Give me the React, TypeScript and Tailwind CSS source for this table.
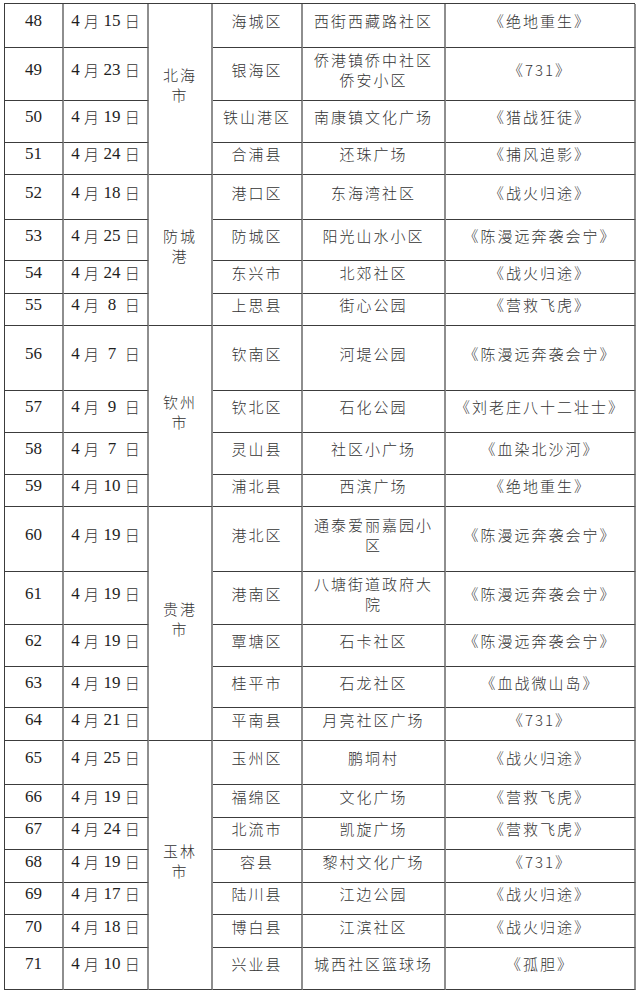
import React from 'react';

type Row = { no: number; date: string; district: string; place: string; film: string };
type Group = { city: string; rows: Row[] };

const groups: Group[] = [
  {
    city: '北海市',
    rows: [
      { no: 48, date: '4 月 15 日', district: '海城区', place: '西街西藏路社区', film: '《绝地重生》' },
      { no: 49, date: '4 月 23 日', district: '银海区', place: '侨港镇侨中社区侨安小区', film: '《731》' },
      { no: 50, date: '4 月 19 日', district: '铁山港区', place: '南康镇文化广场', film: '《猎战狂徒》' },
      { no: 51, date: '4 月 24 日', district: '合浦县', place: '还珠广场', film: '《捕风追影》' },
    ],
  },
  {
    city: '防城港',
    rows: [
      { no: 52, date: '4 月 18 日', district: '港口区', place: '东海湾社区', film: '《战火归途》' },
      { no: 53, date: '4 月 25 日', district: '防城区', place: '阳光山水小区', film: '《陈漫远奔袭会宁》' },
      { no: 54, date: '4 月 24 日', district: '东兴市', place: '北郊社区', film: '《战火归途》' },
      { no: 55, date: '4 月  8  日', district: '上思县', place: '街心公园', film: '《营救飞虎》' },
    ],
  },
  {
    city: '钦州市',
    rows: [
      { no: 56, date: '4 月  7  日', district: '钦南区', place: '河堤公园', film: '《陈漫远奔袭会宁》' },
      { no: 57, date: '4 月  9  日', district: '钦北区', place: '石化公园', film: '《刘老庄八十二壮士》' },
      { no: 58, date: '4 月  7  日', district: '灵山县', place: '社区小广场', film: '《血染北沙河》' },
      { no: 59, date: '4 月 10 日', district: '浦北县', place: '西滨广场', film: '《绝地重生》' },
    ],
  },
  {
    city: '贵港市',
    rows: [
      { no: 60, date: '4 月 19 日', district: '港北区', place: '通泰爱丽嘉园小区', film: '《陈漫远奔袭会宁》' },
      { no: 61, date: '4 月 19 日', district: '港南区', place: '八塘街道政府大院', film: '《陈漫远奔袭会宁》' },
      { no: 62, date: '4 月 19 日', district: '覃塘区', place: '石卡社区', film: '《陈漫远奔袭会宁》' },
      { no: 63, date: '4 月 19 日', district: '桂平市', place: '石龙社区', film: '《血战微山岛》' },
      { no: 64, date: '4 月 21 日', district: '平南县', place: '月亮社区广场', film: '《731》' },
    ],
  },
  {
    city: '玉林市',
    rows: [
      { no: 65, date: '4 月 25 日', district: '玉州区', place: '鹏垌村', film: '《战火归途》' },
      { no: 66, date: '4 月 19 日', district: '福绵区', place: '文化广场', film: '《营救飞虎》' },
      { no: 67, date: '4 月 24 日', district: '北流市', place: '凯旋广场', film: '《营救飞虎》' },
      { no: 68, date: '4 月 19 日', district: '容县', place: '黎村文化广场', film: '《731》' },
      { no: 69, date: '4 月 17 日', district: '陆川县', place: '江边公园', film: '《战火归途》' },
      { no: 70, date: '4 月 18 日', district: '博白县', place: '江滨社区', film: '《战火归途》' },
      { no: 71, date: '4 月 10 日', district: '兴业县', place: '城西社区篮球场', film: '《孤胆》' },
    ],
  },
];

const spanClass: Record<number, string> = { 4: 'row-span-4', 5: 'row-span-5', 7: 'row-span-7' };

const cell =
  'flex items-center justify-center text-center pb-[9px] border-r-2 border-b border-r-[#8e8e8e] border-b-[#3c3c3c]';
const cjk = "font-['Noto_Sans_CJK_SC',sans-serif] font-light text-[15px] tracking-[2px] leading-[20px] text-[#333333]";
const serif = "font-['Liberation_Serif','Noto_Sans_CJK_SC',serif] text-[17px] leading-[20px] text-[#1e1e1e]";

export default function App() {
  return (
    <div className="w-[640px] h-[993px] bg-white pt-[3px] pl-[4px]">
      <div className="grid w-[631px] grid-cols-[59px_85px_64px_90px_143px_190px] grid-rows-[44px_53px_42px_32px_45px_41px_33px_32px_65px_42px_42px_32px_65px_53px_42px_41px_33px_44px_33px_32px_33px_32px_33px_42px] border-t border-l border-t-[#3c3c3c] border-l-[#3c3c3c]">
        {groups.map((g) =>
          g.rows.map((r, i) => (
            <React.Fragment key={r.no}>
              <div className={`${cell} ${serif}`}>{r.no}</div>
              <div className={`${cell} ${serif} whitespace-pre`}>
                {r.date.split(/(月|日)/).map((part, k) =>
                  part === '月' || part === '日' ? (
                    <span key={k} className="font-['Noto_Sans_CJK_SC',sans-serif] font-light text-[15px] text-[#333333]">
                      {part}
                    </span>
                  ) : (
                    <span key={k}>{part}</span>
                  )
                )}
              </div>
              {i === 0 && (
                <div className={`${cell} ${spanClass[g.rows.length]} ${cjk}`}>
                  <div className="w-[36px]">{g.city}</div>
                </div>
              )}
              <div className={`${cell} ${cjk}`}>{r.district}</div>
              <div className={`${cell} ${cjk} px-[6px]`}>{r.place}</div>
              <div className={`${cell} ${cjk} px-[4px]`}>{r.film}</div>
            </React.Fragment>
          ))
        )}
      </div>
    </div>
  );
}
